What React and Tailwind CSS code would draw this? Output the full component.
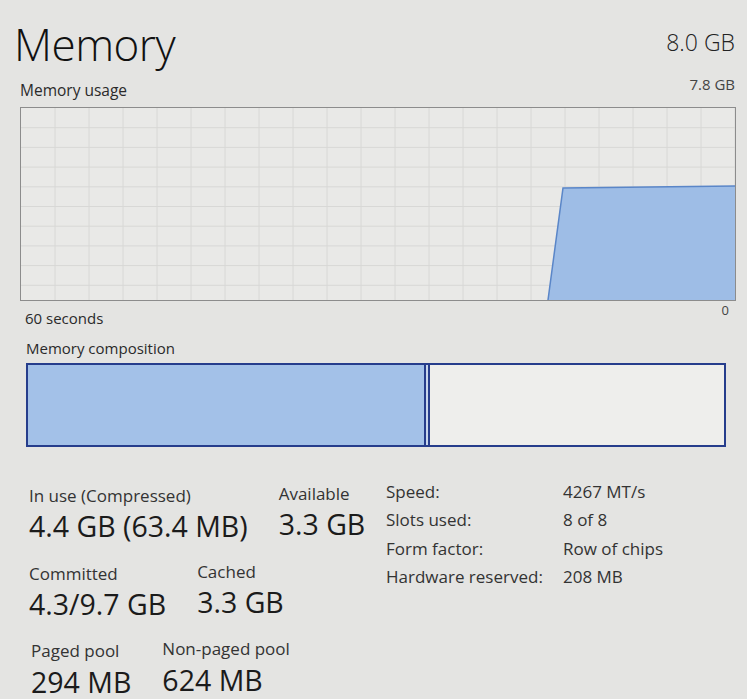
export default function App() {
  const cols = Array.from({ length: 21 }, (_, i) => i + 1);
  const rows = Array.from({ length: 9 }, (_, i) => i + 1);

  return (
    <div className="w-[747px] h-[699px] overflow-hidden bg-[#e4e4e2] text-[#1b1b1b]" style={{ fontFamily: '"Open Sans", "Noto Sans", sans-serif' }}>
      <div className="flex items-start justify-between pl-[14px] pr-[12px] pt-[18px]">
        <h1 className="text-[44px] font-light leading-[52px] tracking-[-0.5px] text-[#111]">Memory</h1>
        <div className="pt-[7px] text-[23px] font-light text-[#222]">8.0 GB</div>
      </div>

      <div className="flex items-end justify-between pl-[20px] pr-[12px] mt-[3px]">
        <div className="text-[15.5px] text-[#2a2a2a]">Memory usage</div>
        <div className="text-[15px] text-[#444] mb-[7px]">7.8 GB</div>
      </div>

      <div className="ml-[20px] mr-[11px] mt-[4px] h-[194px] border border-[#8c8c8c] bg-[#e9e9e7]">
        <svg width="100%" height="100%" viewBox="0 0 714 192" preserveAspectRatio="none">
          {cols.map(c => (
            <line key={c} x1={c * 34} y1="0" x2={c * 34} y2="192" stroke="#d8d8d6" strokeWidth="1" />
          ))}
          {rows.map(r => (
            <line key={r} x1="0" y1={r * 19.7} x2="714" y2={r * 19.7} stroke="#d8d8d6" strokeWidth="1" />
          ))}
          <polygon points="527,192 542,80 714,78 714,192" fill="#9ebde6" />
          <polyline points="527,192 542,80 714,78" fill="none" stroke="#5a86c8" strokeWidth="1.5" />
        </svg>
      </div>

      <div className="flex items-start justify-between pl-[25px] pr-[18px]">
        <div className="text-[15px] text-[#2a2a2a] mt-[6px]">60 seconds</div>
        <div className="text-[13px] text-[#444]">0</div>
      </div>

      <div className="pl-[26px] mt-[8px] text-[15px] text-[#2a2a2a]">Memory composition</div>

      <div className="ml-[26px] mt-[3px] w-[700px] h-[84px] border-2 border-[#263d8c] flex">
        <div className="w-[398px] h-full bg-[#a3c1e8] border-r-2 border-[#263d8c]" />
        <div className="w-[2px] h-full bg-[#c8d6ea]" />
        <div className="flex-1 h-full bg-[#eeeeec] border-l-2 border-[#263d8c]" />
      </div>

      <div className="flex mt-[38px]">
        <div className="w-[356px] pl-[29px] flex flex-col">
          <div className="flex gap-[31px]">
            <div>
              <div className="text-[17px] text-[#333] leading-[22px] whitespace-nowrap">In use (Compressed)</div>
              <div className="text-[28.5px] leading-[36px] mt-[1px] whitespace-nowrap">4.4 GB (63.4 MB)</div>
            </div>
            <div>
              <div className="text-[17px] text-[#333] leading-[22px] -mt-[2px]">Available</div>
              <div className="text-[28.5px] leading-[36px] mt-[1px] whitespace-nowrap">3.3 GB</div>
            </div>
          </div>
          <div className="flex gap-[31px] mt-[19px]">
            <div>
              <div className="text-[17px] text-[#333] leading-[22px]">Committed</div>
              <div className="text-[28.5px] leading-[36px] mt-[1px] whitespace-nowrap">4.3/9.7 GB</div>
            </div>
            <div>
              <div className="text-[17px] text-[#333] leading-[22px] -mt-[2px]">Cached</div>
              <div className="text-[28.5px] leading-[36px] mt-[1px] whitespace-nowrap">3.3 GB</div>
            </div>
          </div>
          <div className="flex gap-[31px] mt-[18px] pl-[2px]">
            <div>
              <div className="text-[17px] text-[#333] leading-[22px]">Paged pool</div>
              <div className="text-[28.5px] leading-[36px] mt-[2px] whitespace-nowrap">294 MB</div>
            </div>
            <div>
              <div className="text-[17px] text-[#333] leading-[22px] -mt-[2px] whitespace-nowrap">Non-paged pool</div>
              <div className="text-[28.5px] leading-[36px] mt-[2px] whitespace-nowrap">624 MB</div>
            </div>
          </div>
        </div>

        <div className="pl-[30px] grid grid-cols-[177px_auto] auto-rows-[28.5px] text-[17px] text-[#333] -mt-[6px] whitespace-nowrap">
          <div>Speed:</div>
          <div>4267 MT/s</div>
          <div>Slots used:</div>
          <div>8 of 8</div>
          <div>Form factor:</div>
          <div>Row of chips</div>
          <div>Hardware reserved:</div>
          <div>208 MB</div>
        </div>
      </div>
    </div>
  );
}
